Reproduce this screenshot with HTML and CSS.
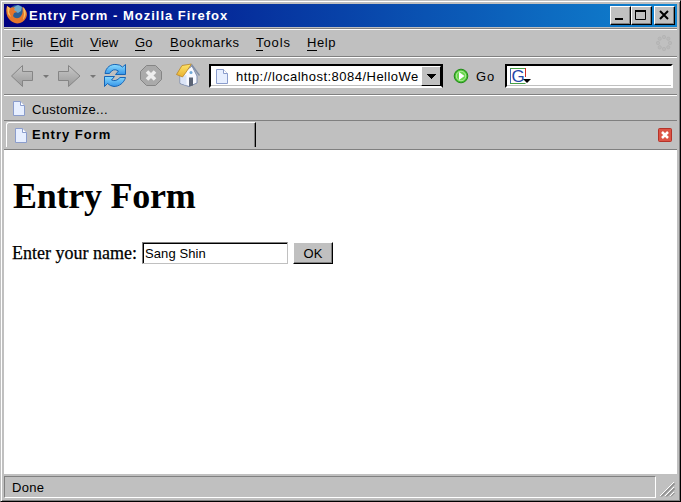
FILE: index.html
```html
<!DOCTYPE html>
<html lang="en">
<head>
<meta charset="utf-8">
<title>Entry Form</title>
<link rel="stylesheet" href="styles.css">
</head>
<body>
<div class="window">
  <header class="titlebar">
    <svg class="fox" width="22" height="20" viewBox="0 0 22 20"><circle cx="11" cy="9" r="8" fill="#2a5f96"/><path d="M8 3l4-2 4 2-1 4-3 2-4-2z" fill="#6fa9cc"/><path d="M1 2l3 2c2-1 4-1 5 0L8 6l3 2-3 1-1 3c2 3 6 3 8 0 2-3 2-6 1-9 5 3 6 7 4 11-3 6-10 7-15 3C1 14-1 8 1 2z" fill="#e5762b"/><path d="M1 2l3 2-1 4 2 5-3-3zm16 1c4 3 3 9 0 13l1-6z" fill="#f7c163"/></svg>
    <span class="title">Entry Form - Mozilla Firefox</span>
    <div class="controls">
      <span class="ctl"><svg width="18" height="16"><path d="M4 11h8v2H4z"/></svg></span>
      <span class="ctl"><svg width="18" height="16"><path d="M3.5 3.5h10v9h-10z" fill="none" stroke="#000"/><path d="M3 3h11v2H3z"/></svg></span>
      <span class="ctl close"><svg width="18" height="16"><path d="M5 4l8 8M13 4l-8 8" stroke="#000" stroke-width="2"/></svg></span>
    </div>
  </header>
  <nav class="menu">
    <span class="m-file"><u>F</u>ile</span><span class="m-edit"><u>E</u>dit</span><span class="m-view"><u>V</u>iew</span><span class="m-go"><u>G</u>o</span><span class="m-book"><u>B</u>ookmarks</span><span class="m-tools"><u>T</u>ools</span><span class="m-help"><u>H</u>elp</span>
    <svg class="throbber" width="18" height="18" viewBox="-9 -9 18 18"><g fill="#b9b9b9" stroke="#adadad" stroke-width=".5"><circle cy="-6" r="1.7"/><circle cy="6" r="1.7"/><circle cx="-6" r="1.7"/><circle cx="6" r="1.7"/><circle cx="4.3" cy="4.3" r="1.7"/><circle cx="-4.3" cy="4.3" r="1.7"/><circle cx="4.3" cy="-4.3" r="1.7"/><circle cx="-4.3" cy="-4.3" r="1.7"/></g></svg>
  </nav>
  <div class="toolbar">
    <svg class="nav-icons" width="198" height="36" viewBox="4 58 198 36">
      <defs>
        <linearGradient id="gray" x2="0" y2="1"><stop stop-color="#c8c8c8"/><stop offset="1" stop-color="#999"/></linearGradient>
        <linearGradient id="blue" x2="0" y2="1"><stop stop-color="#8bdcff"/><stop offset="1" stop-color="#3494e8"/></linearGradient>
        <linearGradient id="roof" x2="0" y2="1"><stop stop-color="#ffe66a"/><stop offset="1" stop-color="#e8b030"/></linearGradient>
      </defs>
      <path d="M11.500 76L22.500 65.500V71.500H32.500V80.500H22.500V86.500Z" fill="url(#gray)" stroke="#858585"/>
      <path d="M80 76L68.500 65.500V71.500H58.500V80.500H68.500V86.500Z" fill="url(#gray)" stroke="#858585"/>
      <path d="M43 75h6l-3 3zM90 75h6l-3 3z" fill="#777"/>
      <path d="M105 73.500C106 67 111 64 116 64.500Q120 64.500 122.500 67L125.500 64.500V74.500H115.500L118.500 71Q113 67.500 109.500 73.500Z" fill="url(#blue)" stroke="#1765b5"/>
      <path d="M125.500 77.500C124 83 119 86.500 114 86.500Q110 86 107.500 83.500L104.500 86.500V76.500H114.500L111.500 80Q116 82 120 77.500Z" fill="url(#blue)" stroke="#1765b5"/>
      <path d="M146.500 65.500h9l6 6v8l-6 6h-9l-6-6v-8z" fill="#aaa" stroke="#858585"/>
      <path d="M147 71.500l8 8m0-8l-8 8" stroke="#eee" stroke-width="3.600"/>
      <path d="M180 75l12-9 5 10v7l-8 3.500-9-3z" fill="#f7f9ff" stroke="#7d8db0"/>
      <path d="M180.500 76v7l6 2.500V75z" fill="#dbe4f6"/><path d="M189 77.500h4v8l-4 1z" fill="#5b6475"/><circle cx="191" cy="72.500" r="1.500" fill="#6fa8d8"/>
      <path d="M176.500 74.500l5.500-9 9.500-1.500-6 9-3 4z" fill="url(#roof)" stroke="#b98324" stroke-width=".8"/><path d="M191.500 64.500l8 11" stroke="#7f8da4" stroke-width="1.300"/>
    </svg>
    <div class="url">
      <svg class="page" width="12" height="15" viewBox="0 0 12 15"><path d="M.5.5h7l4 4v10H.5z" fill="#e7efff" stroke="#8b9dcc"/><path d="M7.500.5v4h4" fill="#fff" stroke="#8b9dcc"/></svg>
      <span class="address">http://localhost:8084/HelloWe</span>
      <span class="drop"><svg width="19" height="18"><path d="M5 7h9v1h-1v1h-1v1h-1v1h-1v1H9v-1H8v-1H7V9H6V8H5z"/></svg></span>
    </div>
    <svg class="go-icon" width="16" height="16"><circle cx="8" cy="8" r="6.800" fill="#45bd2f" stroke="#218b17"/><circle cx="8" cy="8" r="4.800" fill="#6bd64f" stroke="#b4ef9f"/><path d="M6 4l5.500 4L6 12z" fill="#fff"/></svg>
    <span class="go">Go</span>
    <div class="search">
      <svg width="24" height="18"><path d="M1.500 17V1.500" stroke="#3b66b0"/><path d="M1 16.500h15.500M1 1.500h15" stroke="#48a046"/><path d="M16.500 1v9" stroke="#d02d25"/><text x="2.500" y="14.500" class="g">G</text><path d="M14 12h8l-4 4z"/></svg>
    </div>
  </div>
  <div class="bookmarks">
    <svg class="page" width="12" height="15" viewBox="0 0 12 15"><path d="M.5.5h7l4 4v10H.5z" fill="#e7efff" stroke="#8b9dcc"/><path d="M7.500.5v4h4" fill="#fff" stroke="#8b9dcc"/></svg>
    <span class="customize">Customize...</span>
  </div>
  <div class="tabs">
    <div class="tab">
      <svg class="page" width="12" height="15" viewBox="0 0 12 15"><path d="M.5.5h7l4 4v10H.5z" fill="#e7efff" stroke="#8b9dcc"/><path d="M7.500.5v4h4" fill="#fff" stroke="#8b9dcc"/></svg>
      <span class="tabname">Entry Form</span>
    </div>
    <svg class="tabclose" width="14" height="14"><rect x=".5" y=".5" width="13" height="13" rx="1" fill="#dc5446" stroke="#b53329"/><path d="M4 4l6 6m0-6l-6 6" stroke="#fff" stroke-width="2.500"/></svg>
  </div>
  <main class="content">
    <h1>Entry Form</h1>
    <form class="form">
      <label for="name">Enter your name:</label>
      <input id="name" type="text" value="Sang Shin">
      <button type="button">OK</button>
    </form>
  </main>
  <footer class="status">
    <div class="message"><span class="done">Done</span></div>
    <svg width="19" height="25"><path d="M4 22L18 8M9 22l9-9M14 22l4-4" stroke="#fff"/><path d="M5 22.500L18.500 9M6 22.500L18.500 10M10 22.500l8.500-8.500M11 22.500l7.500-7.500M15 22.500l3.500-3.500" stroke="#808080"/></svg>
  </footer>
</div>
</body>
</html>
```
FILE: styles.css
```css
* { box-sizing: border-box; }
body { margin: 0; overflow: hidden; background: #c0c0c0; font: 13px/16px "Liberation Sans", sans-serif; color: #000; }
svg { display: block; flex: none; }
span, label, h1 { white-space: nowrap; }
.window { width: 681px; height: 502px; background: #c0c0c0; border: 1px solid; border-color: #c0c0c0 #000 #000 #c0c0c0; box-shadow: inset 1px 1px #fff, inset -1px -1px #808080; padding: 3px 3px 2px 3px; display: flex; flex-direction: column; }
.titlebar { height: 23px; flex: none; display: flex; align-items: center; background: linear-gradient(90deg, #000080, #1084d0); color: #fff; padding-left: 2px; }
.fox { margin-bottom: 3px; }
.title { margin-left: 1px; margin-top: 1px; width: 203px; font-weight: bold; font-size: 13px; letter-spacing: 1px; }
.controls { display: flex; margin-left: auto; padding-right: 2px; }
.ctl { width: 21px; height: 19px; background: #c0c0c0; border: 1px solid; border-color: #fff #000 #000 #fff; box-shadow: inset -1px -1px #808080; }
.ctl.close { margin-left: 2px; }
.menu { height: 30px; flex: none; border-bottom: 1px solid #808080; display: flex; align-items: center; padding: 3px 4px 0 8px; background: linear-gradient(#c0c0c0 1px, #808080 1px, #808080 2px, #fff 2px, #fff 3px, #c0c0c0 3px); }
.menu u { text-decoration: none; border-bottom: 1px solid #000; }
.m-file { width: 38px; letter-spacing: .1px; }
.m-edit { width: 40px; letter-spacing: .2px; }
.m-view { width: 45px; letter-spacing: .1px; }
.m-go { width: 35px; letter-spacing: .2px; }
.m-book { width: 86px; letter-spacing: .5px; }
.m-tools { width: 51px; letter-spacing: .9px; }
.m-help { letter-spacing: .6px; }
.m-tools { letter-spacing: .9px; }
.throbber { margin-left: auto; }
.toolbar { height: 38px; flex: none; border-top: 1px solid #fff; border-bottom: 1px solid #808080; display: flex; align-items: center; }
.url { width: 234px; height: 24px; margin-left: 7px; display: flex; align-items: center; background: #fff; border: 2px solid; border-color: #000 #000 #fff #000; box-shadow: inset 0 -1px #c0c0c0; padding-left: 5px; }
.address { margin: 2px 0 0 8px; width: 183px; overflow: hidden; letter-spacing: .48px; }
.drop { width: 20px; height: 20px; margin-left: auto; background: #c0c0c0; border: 1px solid; border-color: #fff #000 #000 #fff; flex: none; }
.go-icon { margin-left: 10px; }
.go { margin: 2px 0 0 7px; width: 29px; letter-spacing: .8px; }
.search { width: 168px; height: 24px; border: 2px solid; border-color: #000 #fff #fff #000; background: #fff; padding: 1px 0 0 2px; box-shadow: inset 0 -1px #c0c0c0; }
.g { font: 17px "Liberation Sans", sans-serif; fill: #2446a8; }
.bookmarks { height: 26px; flex: none; border-top: 1px solid #fff; border-bottom: 1px solid #808080; display: flex; align-items: center; padding-left: 9px; }
.customize { margin: 3px 0 0 7px; letter-spacing: .3px; }
.tabs { height: 29px; flex: none; border-bottom: 1px solid #808080; display: flex; }
.tab { margin: 1px 0 2px 2px; width: 250px; border-top: 1px solid #fff; border-left: 1px solid #fff; border-right: 1px solid #000; box-shadow: inset -1px 0 #808080; border-radius: 3px 0 0; display: flex; align-items: center; padding-left: 8px; }
.tabname { margin-left: 5px; font-weight: bold; letter-spacing: 1px; }
.tabclose { margin: 7px 5px 0 auto; }
.content { flex: 1; background: #fff; padding: 26px 8px 0; font-family: "Liberation Serif", serif; }
h1 { margin: 0 0 0 1px; font-size: 36px; line-height: 41px; letter-spacing: -.25px; }
.form { margin-top: 25px; display: flex; align-items: center; }
label { width: 130px; font-size: 18px; line-height: 20px; -webkit-text-stroke: .25px #000; }
input { width: 146px; height: 22px; padding: 1px 1px 0 2px; font: 13px "Liberation Sans", sans-serif; letter-spacing: .1px; border: 1px solid; border-color: #808080 #c0c0c0 #c0c0c0 #808080; border-radius: 0; box-shadow: inset 1px 1px #000; outline: 0; }
button { margin-left: 5px; width: 40px; height: 22px; padding: 1px 0 0; font: 13px "Liberation Sans", sans-serif; border: 1px solid; border-color: #fff #000 #000 #fff; background: #c0c0c0; box-shadow: inset -1px -1px #808080; border-radius: 0; }
.status { height: 25px; flex: none; display: flex; }
.message { width: 652px; height: 22px; margin-top: 2px; border: 1px solid; border-color: #808080 #fff #fff #808080; padding: 3px 7px; }
.done { letter-spacing: .3px; }
```
